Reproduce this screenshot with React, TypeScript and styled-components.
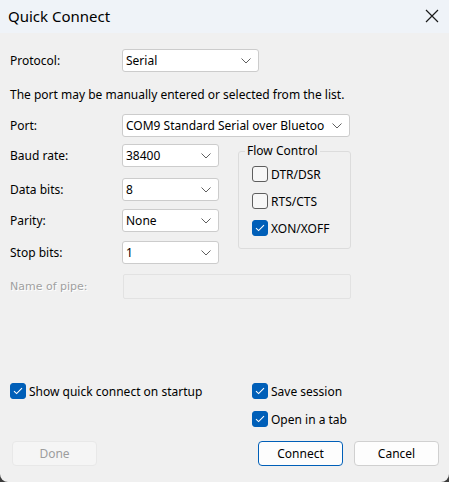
import React from "react";
import styled, { createGlobalStyle } from "styled-components";

const Global = createGlobalStyle`
  html, body { margin: 0; padding: 0; background: #3c3c3c; }
  body { width: 449px; height: 482px; overflow: hidden; }
  * { box-sizing: border-box; }
`;

const FONT = `"Segoe UI", "Noto Sans", "Open Sans", sans-serif`;

const Window = styled.div`
  width: 449px;
  height: 482px;
  background: #f0f0f0;
  border-radius: 0 0 8px 8px;
  overflow: hidden;
  display: flex;
  flex-direction: column;
  font-family: ${FONT};
  font-size: 12px;
  color: #000;
`;

const TitleBar = styled.div`
  height: 33px;
  flex: none;
  background: #eff3f8;
  display: flex;
  align-items: center;
  justify-content: space-between;
  padding: 0 10px 0 8px;
`;

const Title = styled.div`
  font-size: 15px;
  margin-top: -2px;
`;

const Close = styled.div`
  width: 14px;
  height: 14px;
  display: flex;
  margin-top: -2px;
`;

const Body = styled.div`
  flex: 1;
  display: flex;
  flex-direction: column;
  padding: 16px 0 0 10px;
`;

const Row = styled.div<{ $mt?: number }>`
  display: grid;
  grid-template-columns: 112px auto;
  align-items: center;
  margin-top: ${(p) => p.$mt ?? 0}px;
`;

const Label = styled.span<{ $disabled?: boolean }>`
  color: ${(p) => (p.$disabled ? "#a0a0a0" : "#000")};
  text-shadow: ${(p) => (p.$disabled ? "1px 1px 0 #ffffff" : "none")};
  font-family: ${(p) => (p.$disabled ? `"DejaVu Sans", sans-serif` : "inherit")};
  font-size: ${(p) => (p.$disabled ? "11px" : "12px")};
`;

const Select = styled.div<{ $w: number }>`
  width: ${(p) => p.$w}px;
  height: 23px;
  background: #ffffff;
  border: 1px solid #cccccc;
  border-radius: 3px;
  display: flex;
  align-items: center;
  gap: 4px;
  padding: 0 7px 0 3px;
  white-space: nowrap;
`;

const SelectText = styled.span`
  flex: 1;
  min-width: 0;
  overflow: hidden;
`;

const PipeInput = styled.div`
  width: 228px;
  height: 25px;
  margin-left: 1px;
  border: 1px solid #e2e2e2;
  border-radius: 2px;
  background: #f0f0f0;
`;

const Note = styled.div`
  margin-top: 14px;
`;

const Columns = styled.div`
  display: flex;
  margin-top: 7px;
`;

const LeftCol = styled.div`
  display: flex;
  flex-direction: column;
`;

const Group = styled.fieldset`
  margin: 0 0 0 19px;
  padding: 0 0 0 13px;
  width: 113px;
  height: 105px;
  border: 1px solid #dcdcdc;
  border-radius: 3px;
`;

const Legend = styled.legend`
  padding: 0 2px;
  margin-left: -7px;
  line-height: 14px;
`;

const GroupItems = styled.div`
  display: flex;
  flex-direction: column;
  gap: 11px;
  padding-top: 8px;
`;

const Check = styled.label`
  display: flex;
  align-items: center;
  gap: 3px;
  height: 16px;
`;

const Box = styled.span<{ $on?: boolean }>`
  width: 16px;
  height: 16px;
  border-radius: 3px;
  flex: none;
  display: flex;
  align-items: center;
  justify-content: center;
  background: ${(p) => (p.$on ? "#005fb8" : "#f7f7f7")};
  border: 1px solid ${(p) => (p.$on ? "#005fb8" : "#5e5e5e")};
`;

const Spacer = styled.div`
  flex: 1;
`;

const Bottom = styled.div`
  display: grid;
  grid-template-columns: 242px auto;
  row-gap: 12px;
`;

const Buttons = styled.div`
  display: flex;
  align-items: center;
  justify-content: space-between;
  padding: 14px 10px 16px 12px;
`;

const ButtonGroup = styled.div`
  display: flex;
  gap: 11px;
`;

const Button = styled.button<{ $variant?: "primary" | "disabled" }>`
  width: 85px;
  height: 25px;
  font-family: ${FONT};
  font-size: 12px;
  border-radius: 4px;
  padding: 0;
  background: ${(p) => (p.$variant === "disabled" ? "#f5f5f5" : "#fdfdfd")};
  color: ${(p) => (p.$variant === "disabled" ? "#9d9d9d" : "#000")};
  border: 1px solid
    ${(p) =>
      p.$variant === "primary" ? "#005fb8" : p.$variant === "disabled" ? "#e8e8e8" : "#d0d0d0"};
`;

const Chevron = () => (
  <svg width="10" height="6" viewBox="0 0 10 6" style={{ flex: "none" }}>
    <path d="M0.5 0.5 L5 5 L9.5 0.5" fill="none" stroke="#5f5f5f" strokeWidth="1" />
  </svg>
);

const Tick = () => (
  <svg width="10" height="8" viewBox="0 0 10 8">
    <path d="M1 4.2 L3.6 6.6 L9 1.2" fill="none" stroke="#ffffff" strokeWidth="1.1" />
  </svg>
);

const CheckBox = ({ on, label }: { on?: boolean; label: string }) => (
  <Check>
    <Box $on={on}>{on && <Tick />}</Box>
    <span>{label}</span>
  </Check>
);

const Combo = ({ w, value }: { w: number; value: string }) => (
  <Select $w={w}>
    <SelectText>{value}</SelectText>
    <Chevron />
  </Select>
);

export default function App() {
  return (
    <Window>
      <Global />
      <TitleBar>
        <Title>Quick Connect</Title>
        <Close>
          <svg width="14" height="14" viewBox="0 0 14 14">
            <path d="M1 1 L13 13 M13 1 L1 13" stroke="#1a1a1a" strokeWidth="1.2" />
          </svg>
        </Close>
      </TitleBar>
      <Body>
        <Row>
          <Label>Protocol:</Label>
          <Combo w={137} value="Serial" />
        </Row>
        <Note>The port may be manually entered or selected from the list.</Note>
        <Row $mt={11}>
          <Label>Port:</Label>
          <Combo w={228} value="COM9 Standard Serial over Bluetoo" />
        </Row>
        <Columns>
          <LeftCol>
            <Row>
              <Label>Baud rate:</Label>
              <Combo w={97} value="38400" />
            </Row>
            <Row $mt={11}>
              <Label>Data bits:</Label>
              <Combo w={97} value="8" />
            </Row>
            <Row $mt={8}>
              <Label>Parity:</Label>
              <Combo w={97} value="None" />
            </Row>
            <Row $mt={9}>
              <Label>Stop bits:</Label>
              <Combo w={97} value="1" />
            </Row>
          </LeftCol>
          <Group>
            <Legend>Flow Control</Legend>
            <GroupItems>
              <CheckBox label="DTR/DSR" />
              <CheckBox label="RTS/CTS" />
              <CheckBox on label="XON/XOFF" />
            </GroupItems>
          </Group>
        </Columns>
        <Row $mt={10}>
          <Label $disabled>Name of pipe:</Label>
          <PipeInput />
        </Row>
        <Spacer />
        <Bottom>
          <CheckBox on label="Show quick connect on startup" />
          <CheckBox on label="Save session" />
          <span />
          <CheckBox on label="Open in a tab" />
        </Bottom>
      </Body>
      <Buttons>
        <Button $variant="disabled">Done</Button>
        <ButtonGroup>
          <Button $variant="primary">Connect</Button>
          <Button>Cancel</Button>
        </ButtonGroup>
      </Buttons>
    </Window>
  );
}
